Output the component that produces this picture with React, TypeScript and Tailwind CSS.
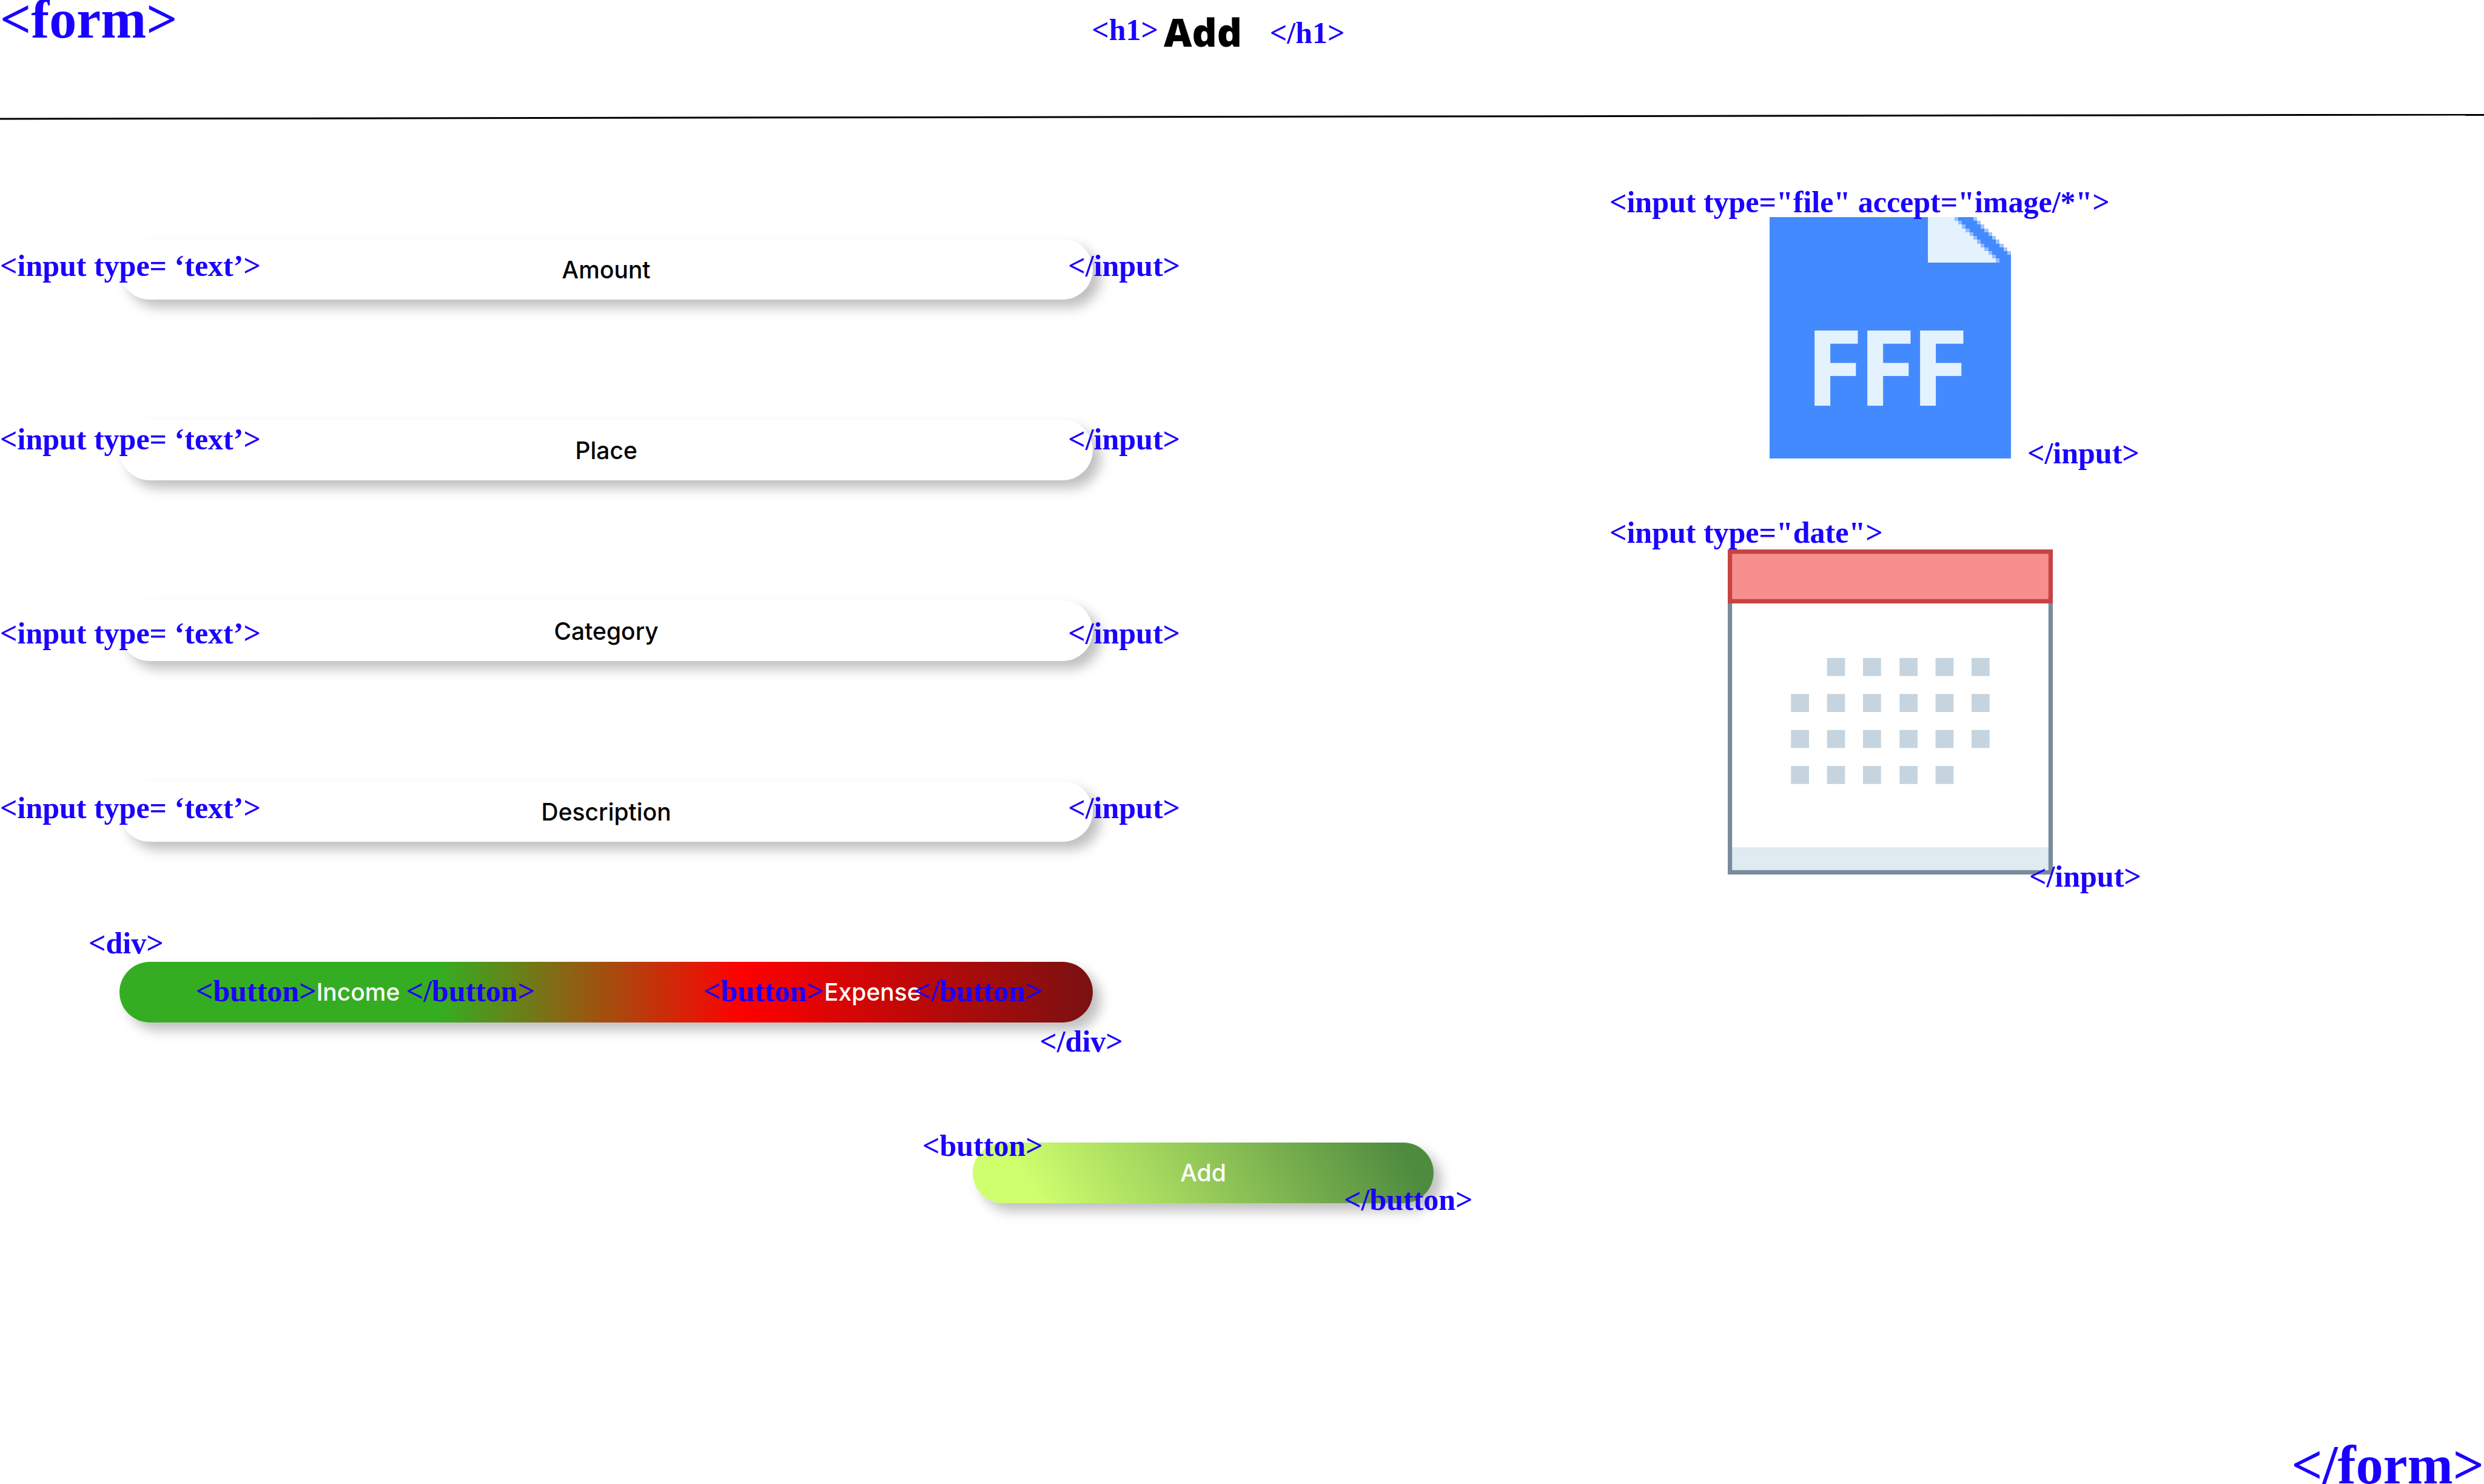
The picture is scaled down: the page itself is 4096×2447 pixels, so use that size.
import React from "react";

const tagText =
  "pointer-events-none whitespace-nowrap font-['Liberation_Serif',serif] text-[50px] font-bold leading-[50px] text-[#1a00ff]";
const shadow = "shadow-[13px_13px_20px_rgba(0,0,0,0.25)]";
const labelText = "font-['Inter',sans-serif] text-[39px] font-medium leading-[48px]";

function Tag({ className = "", children }: { className?: string; children: React.ReactNode }) {
  return (
    <span aria-hidden="true" className={`${tagText} ${className}`}>
      {children}
    </span>
  );
}

const fields = [
  { name: "Amount", tagTop: "top-[19px]" },
  { name: "Place", tagTop: "top-[7px]" },
  { name: "Category", tagTop: "top-[29px]" },
  { name: "Description", tagTop: "top-[19px]" },
];

function TextField({ name, tagTop }: { name: string; tagTop: string }) {
  return (
    <div className="relative pl-[197px]">
      <input
        type="text"
        name={name.toLowerCase()}
        aria-label={name}
        placeholder={name}
        className={`block h-[100px] w-full rounded-full bg-white text-center text-black placeholder:text-black placeholder:opacity-100 ${labelText} ${shadow}`}
      />
      <Tag className={`absolute left-0 ${tagTop}`}>&lt;input type= ‘text’&gt;</Tag>
      <Tag className={`absolute left-full -ml-[41px] ${tagTop}`}>&lt;/input&gt;</Tag>
    </div>
  );
}

function ToggleButton({ children }: { children: string }) {
  return (
    <button type="button" className="flex items-center">
      <Tag className="-mt-1">&lt;button&gt;</Tag>
      <span className={`w-[148px] text-left text-white ${labelText}`}>{children}</span>
      <Tag className="-mt-1">&lt;/button&gt;</Tag>
    </button>
  );
}

function FileIcon() {
  const rows = Array.from({ length: 12 }, (_, i) => i);
  return (
    <svg viewBox="0 0 64 64" className="block size-[398px]" aria-hidden="true">
      <g shapeRendering="crispEdges">
        <rect y="10" width="64" height="54" fill="#448aff" />
        {rows.slice(0, 10).map((r) => (
          <g key={r}>
            <rect y={r} width={54 + r} height="1" fill="#448aff" />
            <rect x={54 + r} y={r} width="1" height="1" fill="#a1c4fb" />
          </g>
        ))}
        {rows.map((r) => (
          <g key={r}>
            <rect x="42" y={r} width={7 + r} height="1" fill="#e3f2fd" />
            <rect x={49 + r} y={r} width="1" height="1" fill="#94bdfb" />
          </g>
        ))}
      </g>
      <text x="9.4 23.4 37.4" y="50" fill="#e3f2fd" fontFamily="Open Sans, sans-serif" fontWeight="700" fontSize="28">
        FFF
      </text>
    </svg>
  );
}

function CalendarIcon() {
  const columns = [116, 182, 248, 315, 381, 447];
  const lines = [199, 265, 331, 397];
  return (
    <svg viewBox="0 0 596 596" className="block size-[536px]" aria-hidden="true">
      <rect x="4" y="4" width="588" height="588" fill="#fff" />
      <rect x="4" y="546" width="588" height="46" fill="#dfebf0" />
      <rect x="4" y="4" width="588" height="588" fill="none" stroke="#788b9c" strokeWidth="8" />
      <rect x="4" y="4" width="588" height="91" fill="#f78f8f" stroke="#c74343" strokeWidth="8" />
      {lines.map((y, row) =>
        columns.map((x, col) =>
          (row === 0 && col === 0) || (row === 3 && col === 5) ? null : (
            <rect key={`${x}-${y}`} x={x} y={y} width="33" height="33" fill="#c5d4de" />
          ),
        ),
      )}
    </svg>
  );
}

export default function App() {
  return (
    <form className="flex min-h-screen flex-col overflow-hidden bg-white" onSubmit={(e) => e.preventDefault()}>
      <header>
        <div className="flex h-[188px] items-start">
          <span
            aria-hidden="true"
            className="w-[44%] font-['Liberation_Serif',serif] text-[90px] font-bold leading-[64px] text-[#1a00ff]"
          >
            &lt;form&gt;
          </span>
          <Tag className="-ml-0.5 mt-6">&lt;h1&gt;</Tag>
          <h1 className="ml-[9px] mt-[20px] font-['Open_Sans',sans-serif] text-[64px] font-extrabold leading-[66px] text-black">
            Add
          </h1>
          <Tag className="ml-[46px] mt-[29px]">&lt;/h1&gt;</Tag>
        </div>
        <svg className="block h-3 w-full" viewBox="0 0 100 12" preserveAspectRatio="none" aria-hidden="true">
          <line x1="0" y1="8" x2="100" y2="1" stroke="#000" strokeWidth="3" vectorEffect="non-scaling-stroke" />
        </svg>
      </header>

      <main className="flex items-start justify-between">
        <section className="flex w-[44%] flex-col gap-[198px] pt-[194px]">
          {fields.map((f) => (
            <TextField key={f.name} {...f} />
          ))}
          <div className="relative pl-[197px]">
            <div
              className={`flex h-[100px] items-center gap-[278px] rounded-full bg-[linear-gradient(90deg,#35ad22_33%,#ff0000_64%,#7a1111_100%)] pl-[126px] ${shadow}`}
            >
              <ToggleButton>Income</ToggleButton>
              <ToggleButton>Expense</ToggleButton>
            </div>
            <Tag className="absolute -top-[56px] left-[146px]">&lt;div&gt;</Tag>
            <Tag className="absolute left-full top-[106px] -ml-[88px]">&lt;/div&gt;</Tag>
          </div>
        </section>

        <section className="flex w-[48%] flex-col items-center gap-[150px] pl-2 pt-[158px]">
          <label className="relative block">
            <input type="file" accept="image/*" aria-label="Receipt image" className="sr-only" />
            <FileIcon />
            <Tag className="absolute -left-[264px] -top-[50px]">&lt;input type="file" accept="image/*"&gt;</Tag>
            <Tag className="absolute left-full top-[364px] ml-[27px]">&lt;/input&gt;</Tag>
          </label>
          <label className="relative block">
            <input type="date" aria-label="Date" className="sr-only" />
            <CalendarIcon />
            <Tag className="absolute -left-[195px] -top-[53px]">&lt;input type="date"&gt;</Tag>
            <Tag className="absolute left-full top-[514px] -ml-[39px]">&lt;/input&gt;</Tag>
          </label>
        </section>
      </main>

      <div className="flex justify-center pr-32 pt-[198px]">
        <div className="relative">
          <button
            type="submit"
            className={`block h-[100px] w-[760px] rounded-full bg-[linear-gradient(61deg,#d0ff6e_13%,#4f8b3f_93%)] text-center text-white ${labelText} ${shadow}`}
          >
            Add
          </button>
          <Tag className="absolute -left-[83px] -top-[20px]">&lt;button&gt;</Tag>
          <Tag className="absolute left-[612px] top-[69px]">&lt;/button&gt;</Tag>
        </div>
      </div>

      <footer className="mt-auto flex h-[76px] justify-end">
        <span
          aria-hidden="true"
          className="font-['Liberation_Serif',serif] text-[90px] font-bold leading-[90px] text-[#1a00ff]"
        >
          &lt;/form&gt;
        </span>
      </footer>
    </form>
  );
}
